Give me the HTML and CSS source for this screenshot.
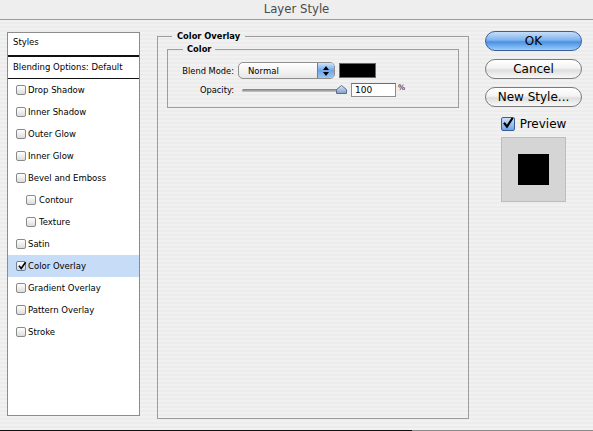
FILE: index.html
```html
<!DOCTYPE html>
<html lang="en">
<head>
  <meta charset="UTF-8" />
  <title>Layer Style</title>
  <link rel="stylesheet" href="styles.css">
</head>
<body>

  <div class="window">
    <div class="titlebar">Layer Style</div>

    <div class="content">

      <!-- Effect list -->
      <aside class="styles-list">
        <div class="list-head">Styles</div>
        <div class="list-blend">Blending Options: Default</div>
        <ul class="effects">
          <li><span class="box"></span>Drop Shadow</li>
          <li><span class="box"></span>Inner Shadow</li>
          <li><span class="box"></span>Outer Glow</li>
          <li><span class="box"></span>Inner Glow</li>
          <li><span class="box"></span>Bevel and Emboss</li>
          <li class="sub"><span class="box"></span>Contour</li>
          <li class="sub"><span class="box"></span>Texture</li>
          <li><span class="box"></span>Satin</li>
          <li class="selected">
            <span class="box checked">
              <svg viewBox="0 0 10 10" width="10" height="10"><path d="M2 4.8 L4.2 7.4 L8.6 1.2" fill="none" stroke="#000" stroke-width="1.6"/></svg>
            </span>Color Overlay
          </li>
          <li><span class="box"></span>Gradient Overlay</li>
          <li><span class="box"></span>Pattern Overlay</li>
          <li><span class="box"></span>Stroke</li>
        </ul>
      </aside>

      <!-- Settings -->
      <fieldset class="group">
        <legend>Color Overlay</legend>
        <fieldset class="group inner">
          <legend>Color</legend>
          <div class="form-grid">
            <label>Blend Mode:</label>
            <div class="row">
              <div class="select">
                <span>Normal</span>
                <span class="stepper">
                  <svg viewBox="0 0 8 12" width="8" height="12"><path d="M4 1 L7 5 L1 5 Z M4 11 L7 7 L1 7 Z" fill="#000"/></svg>
                </span>
              </div>
              <div class="color-chip"></div>
            </div>

            <label>Opacity:</label>
            <div class="row">
              <div class="slider">
                <div class="track"></div>
                <svg class="thumb" viewBox="0 0 11 9" width="11" height="9">
                  <defs>
                    <linearGradient id="thumbFill" x1="0" y1="0" x2="0" y2="1">
                      <stop offset="0" stop-color="#dfe9f5"/>
                      <stop offset="1" stop-color="#7e9cc4"/>
                    </linearGradient>
                  </defs>
                  <path d="M5.5 0.5 L10.5 4.5 L10.5 8.5 L0.5 8.5 L0.5 4.5 Z" fill="url(#thumbFill)" stroke="#5b6f8c"/>
                </svg>
              </div>
              <input class="num" type="text" value="100">
              <span class="unit">%</span>
            </div>
          </div>
        </fieldset>
      </fieldset>

      <!-- Buttons and preview -->
      <div class="actions">
        <button class="btn default">OK</button>
        <button class="btn">Cancel</button>
        <button class="btn">New Style...</button>
        <div class="preview-toggle">
          <span class="big-box">
            <svg viewBox="0 0 14 14" width="14" height="14"><path d="M3 6.8 L6 10.6 L11.6 2" fill="none" stroke="#000" stroke-width="2.2"/></svg>
          </span>
          Preview
        </div>
        <div class="preview">
          <div class="preview-fill"></div>
        </div>
      </div>

    </div>

    <div class="edge"></div>
  </div>

</body>
</html>
```

FILE: styles.css
```css
* { box-sizing: border-box; }

body {
  margin: 0;
  font-family: "DejaVu Sans", sans-serif;
  font-size: 8.5px;
  color: #000;
}

.window {
  width: 593px;
  height: 431px;
  display: flex;
  flex-direction: column;
  background: repeating-linear-gradient(to bottom, #f1f1f1 0 2px, #ececec 2px 4px);
}

.titlebar {
  height: 20px;
  line-height: 18px;
  text-align: center;
  font-size: 11.7px;
  color: #4a4a4a;
  background: #eeeeee;
  border-bottom: 1px solid #9b9b9b;
}

.content {
  flex: 1;
  display: flex;
  align-items: flex-start;
  padding: 10px 0 0 7px;
}

/* left list */
.styles-list {
  width: 133px;
  height: 384px;
  margin-top: 2px;
  background: #fff;
  border: 1px solid #8c8c8c;
}

.list-head {
  height: 24px;
  line-height: 19px;
  padding-left: 5px;
  border-bottom: 2px solid #111;
}

.list-blend {
  height: 22px;
  line-height: 21px;
  padding-left: 5px;
  border-bottom: 1px solid #111;
}

.effects {
  list-style: none;
  margin: 0;
  padding: 0;
}

.effects li {
  height: 22px;
  display: flex;
  align-items: center;
  padding-left: 8px;
  gap: 2px;
}

.effects li.sub {
  padding-left: 18px;
  gap: 3px;
}

.effects li.selected {
  background-color: #c6dcf7;
}

.box {
  width: 10px;
  height: 10px;
  border: 1px solid #8a8a8a;
  border-radius: 2px;
  background: linear-gradient(#ffffff, #dcdcdc);
  display: inline-flex;
  align-items: center;
  justify-content: center;
  position: relative;
}

.box.checked {
  border-color: #6f7f95;
  background: linear-gradient(#ffffff, #c9d8ea);
}

.box.checked svg {
  position: absolute;
  left: 0;
  top: -1px;
}

/* group boxes */
.group {
  margin: 0 0 0 17px;
  padding: 0 9px;
  width: 312px;
  height: 389px;
  border: 1px solid #9d9d9d;
  min-width: 0;
}

.group legend {
  margin-left: 5px;
  padding: 0 5px;
  font-weight: bold;
  font-size: 8.3px;
  line-height: 12px;
}

.group.inner {
  margin: 1px 0 0;
  padding: 0 0 10px;
  width: 292px;
  height: auto;
}

.group.inner legend {
  margin-left: 15px;
  padding: 0 4px;
}

.form-grid {
  display: grid;
  grid-template-columns: 66px auto;
  column-gap: 4px;
  row-gap: 4px;
  align-items: center;
  padding-top: 7px;
}

.form-grid label {
  text-align: right;
  font-size: 8.3px;
}

.row {
  display: flex;
  align-items: center;
}

.select {
  width: 97px;
  height: 17px;
  display: flex;
  align-items: center;
  justify-content: space-between;
  padding-left: 9px;
  border: 1px solid #8f8f8f;
  border-radius: 5px;
  background: linear-gradient(#ffffff, #f4f4f4 50%, #e6e6e6);
  overflow: hidden;
}

.stepper {
  width: 17px;
  height: 100%;
  display: flex;
  align-items: center;
  justify-content: center;
  border-left: 1px solid #5f7fb0;
  background: linear-gradient(#cfe3fb, #6fa6e8 50%, #9cc6f3);
}

.color-chip {
  width: 37px;
  height: 15px;
  margin-left: 4px;
  background: #000;
  border: 1px solid #6a6a6a;
}

.slider {
  width: 105px;
  height: 14px;
  margin-left: 4px;
  display: flex;
  align-items: center;
  position: relative;
}

.track {
  width: 100px;
  height: 3px;
  border-radius: 2px;
  background: linear-gradient(#7a7a7a, #c8c8c8);
}

.thumb {
  position: absolute;
  right: 0;
  top: 2px;
}

.num {
  width: 45px;
  height: 14px;
  margin: 0 0 0 4px;
  padding: 0 3px;
  font-family: "DejaVu Sans", sans-serif;
  font-size: 9px;
  border: 1px solid #8c8c8c;
  border-top-color: #6c6c6c;
  background: #fff;
}

.unit {
  margin-left: 2px;
  font-size: 7.5px;
  align-self: flex-start;
}

/* right column */
.actions {
  width: 97px;
  margin: 1px 0 0 16px;
  display: flex;
  flex-direction: column;
  align-items: center;
  gap: 8px;
}

.btn {
  width: 97px;
  height: 20px;
  padding: 0;
  font-family: "DejaVu Sans", sans-serif;
  font-size: 12px;
  color: #000;
  border: 1px solid #7b7b7b;
  border-radius: 10px;
  background: linear-gradient(#ffffff, #f3f3f3 45%, #dedede 55%, #f8f8f8);
}

.btn.default {
  border-color: #3f5f98;
  background: linear-gradient(#c6defa, #7fb3ee 45%, #4a90e2 55%, #9acdfb);
}

.preview-toggle {
  display: flex;
  align-items: center;
  gap: 5px;
  margin-top: 2px;
  font-size: 12px;
}

.big-box {
  width: 14px;
  height: 14px;
  border: 1px solid #3a5f98;
  border-radius: 2px;
  background: linear-gradient(#cbe1fa, #6ea5e6);
  position: relative;
}

.big-box svg {
  position: absolute;
  left: -1px;
  top: -2px;
}

.preview {
  width: 65px;
  height: 65px;
  margin-top: -2px;
  display: flex;
  align-items: center;
  justify-content: center;
  background: #d5d5d5;
  border: 1px solid #bdbdbd;
}

.preview-fill {
  width: 31px;
  height: 31px;
  background: #000;
}

.edge {
  height: 1px;
  background: linear-gradient(to right, #111 0 412px, #8a8a8a 412px);
}
```
